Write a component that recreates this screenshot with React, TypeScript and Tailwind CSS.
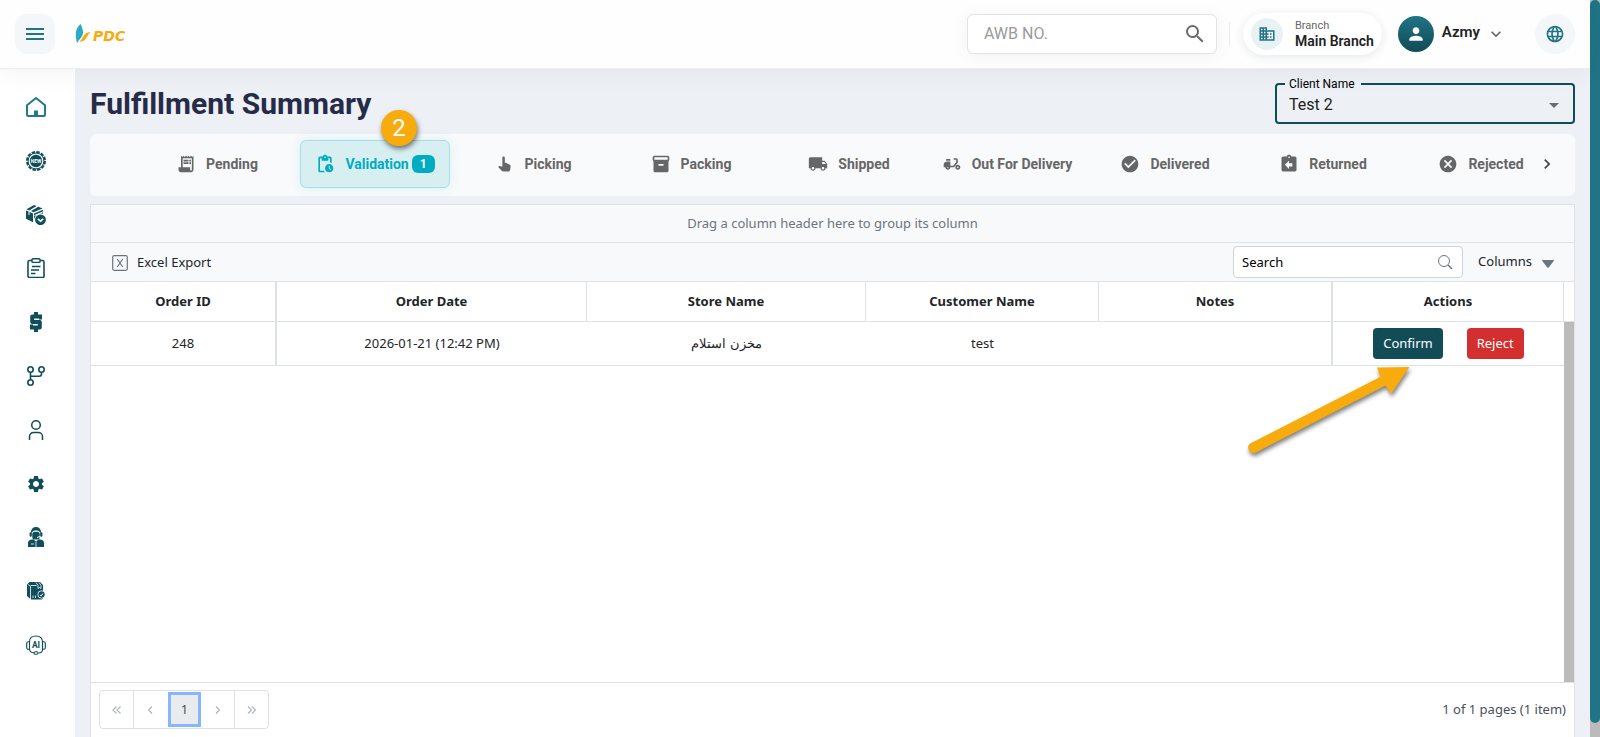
import type { ReactNode } from "react";
import {
  MdArrowDropDown,
  MdAssignmentReturn,
  MdCancel,
  MdCheckCircle,
  MdDeliveryDining,
  MdDomain,
  MdInventory2,
  MdKeyboardArrowDown,
  MdKeyboardArrowRight,
  MdLanguage,
  MdLocalShipping,
  MdMenu,
  MdOutlinePendingActions,
  MdPerson,
  MdReceiptLong,
  MdSearch,
  MdSettings,
} from "react-icons/md";

function Glyph({ children }: { children: ReactNode }) {
  return (
    <svg viewBox="0 0 20 20" className="size-5" fill="none" stroke="currentColor" strokeWidth="1.4" aria-hidden="true">
      {children}
    </svg>
  );
}

function PointingHand({ className }: { className?: string }) {
  return (
    <svg viewBox="0 0 24 24" className={className} fill="currentColor" aria-hidden="true">
      <path d="m19.980 14.820-.63 4.460c-.14.990-.98 1.720-1.980 1.720h-6.160c-.53 0-1.290-.21-1.660-.59L5 15.620l.83-.84c.24-.24.58-.35.92-.28l3.250.74V4.500c0-.83.67-1.500 1.500-1.500s1.500.67 1.500 1.500v6h.91c.31 0 .62.07.89.21l4.090 2.040c.77.38 1.210 1.220 1.090 2.070z" />
    </svg>
  );
}

const navItems: { label: string; icon: ReactNode; active?: boolean }[] = [
  {
    label: "Home",
    active: true,
    icon: (
      <Glyph>
        <path d="M1 8.2 10 1l9 7.200V17.800a1.200 1.200 0 0 1-1.200 1.200H2.200A1.200 1.200 0 0 1 1 17.800Z" strokeWidth="2" strokeLinejoin="round" />
        <path d="M8 13.500h4V19H8Z" fill="currentColor" stroke="none" />
      </Glyph>
    ),
  },
  {
    label: "New orders",
    icon: (
      <Glyph>
        <circle cx="10" cy="10" r="9" strokeWidth="2" strokeDasharray="3.500 1.212" />
        <circle cx="10" cy="10" r="7.900" strokeWidth="1" />
        <circle cx="10" cy="10" r="6.200" fill="currentColor" stroke="none" />
        <text x="10" y="11.800" textAnchor="middle" fontSize="5" fontWeight="700" fill="#fff" stroke="none" fontFamily="Roboto, sans-serif">NEW</text>
      </Glyph>
    ),
  },
  {
    label: "Shipments",
    icon: (
      <Glyph>
        <g fill="currentColor" stroke="none">
          <path d="M0 5.500 7 8.500v8.700L0 13.800Z" />
          <path d="M.5 4.300 8 0l2.500 1L3.200 5.400ZM5 6.100 12.300 1.700l4.200 1.800L7.500 7.300Z" />
          <path d="M8 8.500 17 4.800v4A6.300 6.300 0 0 0 8.500 13l-.5 1Z" />
          <circle cx="14.500" cy="14.800" r="5.400" />
        </g>
        <path d="m8.500 10.500 8.500-3.700M3 6.800V10" stroke="#fff" strokeWidth="1" />
        <path d="m11.800 13.800 2.700 2.400 2.700-2.400" stroke="#fff" strokeWidth="1.600" />
      </Glyph>
    ),
  },
  {
    label: "Orders",
    icon: (
      <Glyph>
        <rect x="2" y="2.500" width="16" height="17" rx="1.500" strokeWidth="1.600" />
        <rect x="6" y=".8" width="8" height="3.600" rx=".8" fill="#fff" strokeWidth="1.400" />
        <path d="M6 8.500h8.500M5 12h8M5 15.500h4.500" strokeWidth="1.500" />
      </Glyph>
    ),
  },
  {
    label: "Finance",
    icon: (
      <Glyph>
        <path d="M16 4.600H6.200V10H13.800v5.400H4M10 0v4M10 16v4" strokeWidth="4" strokeLinejoin="round" />
        <path d="M14.500 3v4.500M5.500 12.500V17" strokeWidth="3" />
      </Glyph>
    ),
  },
  {
    label: "Branches",
    icon: (
      <Glyph>
        <circle cx="4.500" cy="3.500" r="2.700" strokeWidth="1.600" />
        <circle cx="15.500" cy="3.500" r="2.700" strokeWidth="1.600" />
        <circle cx="4.500" cy="16.500" r="2.700" strokeWidth="1.600" />
        <path d="M4.500 6.200v7.600M15.500 6.200V8a2.200 2.200 0 0 1-2.200 2.200H4.500" strokeWidth="1.600" />
      </Glyph>
    ),
  },
  {
    label: "Users",
    icon: (
      <Glyph>
        <circle cx="10" cy="5" r="4.300" strokeWidth="1.500" />
        <path d="M3.500 20v-3.500a4 4 0 0 1 4-4h5a4 4 0 0 1 4 4V20" strokeWidth="1.500" />
      </Glyph>
    ),
  },
  { label: "Settings", icon: <MdSettings className="size-5" /> },
  {
    label: "Agents",
    icon: (
      <Glyph>
        <g fill="currentColor" stroke="none">
          <path d="M4.800 5.500C5 2 7 0 10 0s5 2 5.200 5.500l-1 .2C13.500 4 12 3.500 10 3.500s-3.500.5-4.200 2.200Z" />
          <rect x="3.600" y="5.200" width="2.200" height="4.500" rx="1" />
          <rect x="14.200" y="5.200" width="2.200" height="4.500" rx="1" />
          <rect x="6.300" y="4.800" width="7.400" height="7.600" rx="2.500" />
          <path d="M2 20v-4.500A3 3 0 0 1 4.500 12.700l2.700-.5L10 14.500l2.800-2.300 2.700.5A3 3 0 0 1 18 15.500V20Z" />
        </g>
        <path d="M10 14.500V20M5 17h3" stroke="#fff" strokeWidth=".8" />
        <path d="M14 9.500 11 10.500" stroke="#fff" strokeWidth="1" />
      </Glyph>
    ),
  },
  {
    label: "Inventory",
    icon: (
      <Glyph>
        <g fill="currentColor" stroke="none">
          <path d="M1 3.500 3.500 1H14l3 3v13.500l-1.500 1H5L1 15Z" />
          <circle cx="15.500" cy="13.500" r="3.700" stroke="#fff" strokeWidth=".8" />
        </g>
        <path d="M4.500 19V5.500L2 3.500M4.500 4.500h6M10 1.500l2 3v3l1.500-1L15 7.500V4.500l-2-3M7 17v-2.500M9.500 17v-2.500" stroke="#fff" strokeWidth=".8" />
        <path d="m14 14 1.200 1L17 12.300" stroke="#fff" strokeWidth=".9" />
      </Glyph>
    ),
  },
  {
    label: "AI assistant",
    icon: (
      <Glyph>
        <path d="M3.500 7C3.500 3 6 1 10 1s6.500 2 6.500 6v7.500c0 2-1.500 3.500-4 3.500" strokeWidth="1.100" />
        <path d="M3.500 6.800v7.400H2.200A1.500 1.500 0 0 1 .7 12.700V8.300a1.500 1.500 0 0 1 1.500-1.500ZM16.500 6.800v7.400h1.300a1.500 1.500 0 0 0 1.500-1.500V8.300a1.500 1.500 0 0 0-1.500-1.500ZM3.500 14.200c.3 2.200 1.500 3.500 4.500 3.700" strokeWidth="1.100" />
        <rect x="8" y="16.800" width="4" height="2.400" rx="1.200" strokeWidth="1.100" />
        <text x="10" y="12.500" textAnchor="middle" fontSize="8.500" fontWeight="700" fill="currentColor" stroke="none" fontFamily="Roboto, sans-serif">AI</text>
      </Glyph>
    ),
  },
];

const tabs: { label: string; Icon: (props: { className?: string }) => ReactNode; count?: number }[] = [
  { label: "Pending", Icon: MdReceiptLong },
  { label: "Validation", Icon: MdOutlinePendingActions, count: 1 },
  { label: "Picking", Icon: PointingHand },
  { label: "Packing", Icon: MdInventory2 },
  { label: "Shipped", Icon: MdLocalShipping },
  { label: "Out For Delivery", Icon: MdDeliveryDining },
  { label: "Delivered", Icon: MdCheckCircle },
  { label: "Returned", Icon: MdAssignmentReturn },
  { label: "Rejected", Icon: MdCancel },
];

function TopBar() {
  return (
    <header className="relative z-10 flex h-[69px] shrink-0 items-center border-b border-[#ebedef] bg-[#fefefe] pr-[15px] pl-[15px] shadow-[0_4px_24px_rgba(0,0,0,0.05)]">
      <button type="button" aria-label="Menu" className="grid size-10 place-items-center rounded-xl bg-[#f3f7fa] text-[#207486]">
        <MdMenu className="size-6" />
      </button>
      <a href="#" aria-label="PDC" className="ml-5 flex items-center">
        <svg viewBox="0 0 16 20" className="h-5 w-4">
          <path d="M5.500 0C2 3 .5 7 .8 11c.1 3 .6 5.500 1.200 8.300C3.500 16 8 13 8 8.500c0-3-1.200-6-2.500-8.500Z" fill="#2aa9c4" />
          <path d="M4 18c2-1.500 3-3.500 4.500-6C9.800 9.500 11.500 8.500 15.500 8c-2 2-3.500 4.700-5 7-1.500 2-3 2.500-6.500 3Z" fill="#f8ab0c" />
        </svg>
        <span className="pt-1 pl-[2px] font-['DejaVu_Sans',sans-serif] text-sm leading-4 font-bold text-[#f8ab0c] italic">PDC</span>
      </a>
      <div className="ml-auto flex items-center">
        <label className="flex h-10 w-[250px] items-center rounded-md border border-[#e2e3e4] bg-white pr-[9px] pl-4 shadow-[0_4px_20px_rgba(0,0,0,0.05)]">
          <input aria-label="AWB number" placeholder="AWB NO." className="min-w-0 flex-1 bg-transparent text-base text-[#333] outline-none placeholder:text-[#9a9a9a]" />
          <MdSearch className="size-6 text-[#6b6b6b]" />
        </label>
        <span className="ml-3 h-6 w-px bg-[#e8eaec]" />
        <button type="button" className="ml-[13px] flex h-[42px] items-center gap-3 rounded-full bg-white pr-2 pl-2 text-left shadow-[0_2px_10px_rgba(15,40,60,0.1)]">
          <span className="grid size-8 place-items-center rounded-full bg-[#e8f1f3] text-[#207486]">
            <MdDomain className="size-[18px]" />
          </span>
          <span className="flex flex-col">
            <span className="text-[11px] leading-[14px] text-[#666]">Branch</span>
            <span className="text-sm leading-4 font-semibold text-[#222]">Main Branch</span>
          </span>
        </button>
        <button type="button" className="ml-4 flex items-center text-[#222]">
          <span className="grid size-9 place-items-center rounded-full bg-linear-to-b from-[#207486] to-[#104c57] text-white">
            <MdPerson className="size-5" />
          </span>
          <span className="pb-1 pl-2 text-[15px] leading-5 font-semibold">Azmy</span>
          <MdKeyboardArrowDown className="ml-[6px] size-5 text-[#666]" />
        </button>
        <button type="button" aria-label="Language" className="ml-[29px] grid size-10 place-items-center rounded-full bg-[#f3f7fa] text-[#207486]">
          <MdLanguage className="size-5" />
        </button>
      </div>
    </header>
  );
}

function SideNav() {
  return (
    <nav aria-label="Main" className="w-[75px] shrink-0 bg-white pt-[28px]">
      <ul className="flex h-[558px] flex-col items-center justify-between pr-1">
        {navItems.map((item) => (
          <li key={item.label}>
            <a href="#" aria-label={item.label} className={item.active ? "block text-[#207a8a]" : "block text-[#104e5b]"}>
              {item.icon}
            </a>
          </li>
        ))}
      </ul>
    </nav>
  );
}

function StatusTabs() {
  return (
    <div className="relative flex h-[62px] shrink-0 items-start rounded-md bg-[#f8fafc] px-2 pt-[6px]">
      <div className="ml-11 flex min-w-0 flex-1 gap-2 overflow-x-clip">
        {tabs.map(({ label, Icon, count }) => (
          <button
            key={label}
            type="button"
            className={
              count
                ? "flex h-12 w-[150px] shrink-0 items-center justify-center rounded-md border border-[#a4dfe6] bg-[#d8eff2] text-sm font-bold text-[#00acc1] shadow-[0_0_12px_rgba(0,172,193,0.12)]"
                : "flex h-12 w-[150px] shrink-0 items-center justify-center text-sm font-bold text-[#666]"
            }
          >
            <Icon className="size-5" />
            <span className="pl-[10px] whitespace-nowrap">{label}</span>
            {count && <span className="ml-[3px] rounded-md bg-[#00acc1] px-2 text-xs leading-[18px] font-bold text-white">{count}</span>}
          </button>
        ))}
      </div>
      <button type="button" aria-label="Next statuses" className="grid h-12 w-10 place-items-center text-[#444]">
        <MdKeyboardArrowRight className="size-5" />
      </button>
      <span className="absolute -top-6 left-[291px] grid size-9 place-items-center rounded-full bg-[#f8ab0c] text-2xl leading-none text-white shadow-[1px_3px_5px_rgba(0,0,0,0.5)]">
        2
      </span>
    </div>
  );
}

function OrdersGrid() {
  return (
    <section className="mt-2 flex min-h-0 flex-1 flex-col border border-b-0 border-[#dee2e6] bg-white font-['Noto_Sans',sans-serif] text-[13px] text-[#212529]">
      <div className="flex h-[38px] shrink-0 items-center justify-center border-b border-[#dee2e6] bg-[#f8f9fb] text-[#6c757d]">
        Drag a column header here to group its column
      </div>
      <div className="flex h-[39px] shrink-0 items-center border-b border-[#dee2e6] bg-[#f8f9fb] pr-5 pl-[21px]">
        <button type="button" className="flex items-center gap-[9px] pt-[2px]">
          <svg viewBox="0 0 16 16" className="size-4" fill="none" stroke="#6c757d">
            <rect x=".7" y=".7" width="14.600" height="14.600" rx="1.500" strokeWidth="1.200" />
            <path d="m5.300 4 5.400 8M10.700 4l-5.400 8" strokeWidth="1.200" />
          </svg>
          Excel Export
        </button>
        <label className="ml-auto flex h-8 w-[230px] items-center rounded border border-[#ced4da] bg-white pr-[9px] pl-2">
          <input aria-label="Search orders" placeholder="Search" className="min-w-0 flex-1 bg-transparent pt-[2px] outline-none placeholder:text-black" />
          <svg viewBox="0 0 16 16" className="size-4" fill="none" stroke="#6c757d">
            <circle cx="7" cy="7" r="5.500" />
            <path d="m11 11 4 4" strokeWidth="1.500" />
          </svg>
        </label>
        <button type="button" className="ml-[15px] flex items-center gap-[10px]">
          Columns
          <svg viewBox="0 0 12 8" className="mt-[3px] h-2 w-3">
            <path d="M.5 0h11a.5.500 0 0 1 .4.800L6.700 7.500a.9.900 0 0 1-1.400 0L.1.800A.5.500 0 0 1 .5 0Z" fill="#6c757d" />
          </svg>
        </button>
      </div>
      <table className="w-full shrink-0 table-fixed border-separate border-spacing-0 text-center">
        <colgroup>
          <col className="w-[186px]" />
          <col className="w-[310px]" />
          <col className="w-[279px]" />
          <col className="w-[233px]" />
          <col className="w-[234px]" />
          <col />
          <col className="w-[10px]" />
        </colgroup>
        <thead>
          <tr className="h-10 [&>th]:border-b [&>th]:border-[#dee2e6] [&>th]:p-0 [&>th]:font-bold">
            <th className="border-r-2">Order ID</th>
            <th className="border-r">Order Date</th>
            <th className="border-r">Store Name</th>
            <th className="border-r">Customer Name</th>
            <th className="border-r-2">Notes</th>
            <th className="border-r">Actions</th>
            <th aria-hidden="true" />
          </tr>
        </thead>
        <tbody>
          <tr className="h-11 [&>td]:border-[#dee2e6] [&>td]:p-0">
            <td className="border-r-2 border-b">248</td>
            <td className="border-b">2026-01-21 (12:42 PM)</td>
            <td className="border-b" dir="rtl" lang="ar">مخزن استلام</td>
            <td className="border-b">test</td>
            <td className="border-r-2 border-b" />
            <td className="border-b">
              <div className="flex items-center justify-center gap-6 text-white">
                <button type="button" className="h-[31px] rounded bg-[#114c57] px-[10px]">Confirm</button>
                <button type="button" className="h-[31px] rounded bg-[#d32f2f] px-[10px]">Reject</button>
              </div>
            </td>
            <td className="bg-[#bbb]" />
          </tr>
        </tbody>
      </table>
      <div className="relative flex min-h-0 flex-1 justify-end">
        <div className="w-[10px] bg-[#bbb]" />
        <svg viewBox="0 0 180 100" className="absolute -top-[6px] right-[154px] h-[100px] w-[180px] drop-shadow-[1px_3px_2px_rgba(0,0,0,0.5)]" aria-hidden="true">
          <path d="M10.300 83.500 140.500 16.700 137 7.500 169.500 7 151 34 145.500 25.500 15.300 92.700A5.300 5.300 0 0 1 10.300 83.500Z" fill="#f8ab0c" />
        </svg>
      </div>
      <footer className="flex h-[55px] shrink-0 items-start justify-between border-t border-[#dee2e6] px-2 pt-[7px] text-[#495057]">
        <div className="flex h-[39px] items-stretch rounded border border-[#dee2e6] text-[#adb5bd]">
          <button type="button" aria-label="First page" className="grid w-[34px] place-items-center border-r border-[#dee2e6]">
            <PageArrow d="M4.500 1.500 1 5l3.500 3.500M8.500 1.500 5 5l3.500 3.500" />
          </button>
          <button type="button" aria-label="Previous page" className="grid w-[34px] place-items-center">
            <PageArrow d="M6 1.500 2.500 5 6 8.500" />
          </button>
          <button type="button" aria-current="page" className="my-px w-[33px] border-3 border-[#86b7fe] bg-[#e9ecef] text-[#495057]">1</button>
          <button type="button" aria-label="Next page" className="grid w-[34px] place-items-center border-r border-[#dee2e6]">
            <PageArrow d="M3 1.500 6.500 5 3 8.500" />
          </button>
          <button type="button" aria-label="Last page" className="grid w-[33px] place-items-center">
            <PageArrow d="M1 1.500 4.500 5 1 8.500M5 1.500 8.500 5 5 8.500" />
          </button>
        </div>
        <span className="pt-[10px]">1 of 1 pages (1 item)</span>
      </footer>
    </section>
  );
}

function PageArrow({ d }: { d: string }) {
  return (
    <svg viewBox="0 0 10 10" className="size-[10px]" fill="none" stroke="currentColor" strokeWidth="1.200">
      <path d={d} />
    </svg>
  );
}

export default function App() {
  return (
    <div className="flex h-screen overflow-hidden bg-[#edf0f5] font-[Roboto,sans-serif]">
      <div className="flex min-w-0 flex-1 flex-col">
        <TopBar />
        <div className="flex min-h-0 flex-1">
          <SideNav />
          <main className="flex min-w-0 flex-1 flex-col px-[15px]">
            <div className="flex h-[65px] shrink-0 items-start justify-between pt-2">
              <h1 className="pt-[6px] text-[30px] leading-[42px] font-bold text-[#252b48]">Fulfillment Summary</h1>
              <fieldset className="w-[300px] rounded border-2 border-[#114c57] pr-[7px]">
                <legend className="ml-2 pr-[6px] pl-1 text-xs leading-[14px] text-black">
                  <label htmlFor="client">Client Name</label>
                </legend>
                <div className="flex items-center pb-[3px]">
                  <select id="client" className="h-7 min-w-0 flex-1 appearance-none bg-transparent pl-3 text-base text-[#222] outline-none">
                    <option>Test 2</option>
                  </select>
                  <MdArrowDropDown className="pointer-events-none -ml-6 size-6 text-[#6b6b6b]" />
                </div>
              </fieldset>
            </div>
            <StatusTabs />
            <OrdersGrid />
          </main>
        </div>
      </div>
      <div className="flex w-[10px] shrink-0 flex-col bg-[#bbb] pb-[14px]" aria-hidden="true">
        <div className="flex-1 rounded-full bg-[#207486]" />
      </div>
    </div>
  );
}
